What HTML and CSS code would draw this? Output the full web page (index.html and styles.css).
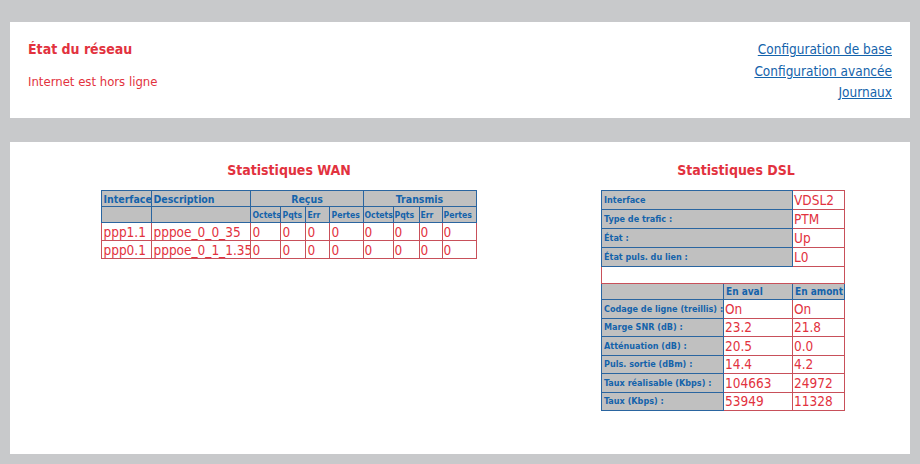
FILE: index.html
```html
<!DOCTYPE html>
<html lang="fr">
<head>
    <meta charset="UTF-8">
    <meta name="viewport" content="width=device-width, initial-scale=1.0">
    <title>État du réseau</title>
    <link rel="stylesheet" href="styles.css">
</head>
<body>
    <main>
        <section class="panneau entete">
            <div class="etat">
                <h1>État du réseau</h1>
                <p>Internet est hors ligne</p>
            </div>
            <nav class="liens">
                <a href="#">Configuration de base</a>
                <a href="#">Configuration avancée</a>
                <a href="#">Journaux</a>
            </nav>
        </section>
        <section class="panneau stats">
            <div class="stats-wan">
                <h2>Statistiques WAN</h2>
                <table class="tabela wan">
                    <colgroup>
                        <col style="width:50px"><col style="width:99px">
                        <col style="width:30px"><col style="width:25px"><col style="width:24px"><col style="width:33px">
                        <col style="width:30px"><col style="width:26px"><col style="width:23px"><col style="width:34px">
                    </colgroup>
                    <thead>
                        <tr class="h1">
                            <th>Interface</th>
                            <th>Description</th>
                            <th colspan="4" class="centro">Reçus</th>
                            <th colspan="4" class="centro">Transmis</th>
                        </tr>
                        <tr class="h2">
                            <th></th>
                            <th></th>
                            <th>Octets</th><th>Pqts</th><th>Err</th><th>Pertes</th>
                            <th>Octets</th><th>Pqts</th><th>Err</th><th>Pertes</th>
                        </tr>
                    </thead>
                    <tbody>
                        <tr>
                            <td>ppp1.1</td><td>pppoe_0_0_35</td>
                            <td>0</td><td>0</td><td>0</td><td>0</td>
                            <td>0</td><td>0</td><td>0</td><td>0</td>
                        </tr>
                        <tr>
                            <td>ppp0.1</td><td>pppoe_0_1_1.35</td>
                            <td>0</td><td>0</td><td>0</td><td>0</td>
                            <td>0</td><td>0</td><td>0</td><td>0</td>
                        </tr>
                    </tbody>
                </table>
            </div>
            <div class="stats-dsl">
                <h2>Statistiques DSL</h2>
                <table class="tabela dsl">
                    <colgroup>
                        <col style="width:122px"><col style="width:69px"><col style="width:52px">
                    </colgroup>
                    <tbody>
                        <tr class="haut"><th colspan="2">Interface</th><td>VDSL2</td></tr>
                        <tr class="haut"><th colspan="2">Type de trafic :</th><td>PTM</td></tr>
                        <tr class="haut"><th colspan="2">État :</th><td>Up</td></tr>
                        <tr class="haut"><th colspan="2">État puls. du lien :</th><td>L0</td></tr>
                        <tr class="vide"><td colspan="3"></td></tr>
                        <tr class="titre"><th></th><th>En aval</th><th>En amont</th></tr>
                        <tr><th>Codage de ligne (treillis) :</th><td>On</td><td>On</td></tr>
                        <tr><th>Marge SNR (dB) :</th><td>23.2</td><td>21.8</td></tr>
                        <tr><th>Atténuation (dB) :</th><td>20.5</td><td>0.0</td></tr>
                        <tr><th>Puls. sortie (dBm) :</th><td>14.4</td><td>4.2</td></tr>
                        <tr><th>Taux réalisable (Kbps) :</th><td>104663</td><td>24972</td></tr>
                        <tr><th>Taux (Kbps) :</th><td>53949</td><td>11328</td></tr>
                    </tbody>
                </table>
            </div>
        </section>
    </main>
</body>
</html>
```
FILE: styles.css
```css
* {
    font-family: "DejaVu Sans Condensed", "DejaVu Sans", sans-serif;
    box-sizing: border-box;
}
body {
    margin: 0;
    background-color: #c8c9cb;
}
main {
    display: flex;
    flex-direction: column;
    gap: 24px;
    padding: 22px 10px 10px 10px;
}
.panneau {
    background-color: #ffffff;
}
.entete {
    display: flex;
    justify-content: space-between;
    height: 96px;
    padding: 18px 18px 0 18px;
}
.etat h1 {
    margin: 0;
    color: #e2323e;
    font-size: 14px;
    font-weight: bold;
    line-height: 18px;
}
.etat p {
    margin: 16px 0 0 0;
    color: #e2323e;
    font-size: 13px;
    line-height: 16px;
}
.liens {
    display: flex;
    flex-direction: column;
    align-items: flex-end;
    margin-top: -1px;
}
.liens a {
    color: #1463ab;
    font-size: 13.5px;
    line-height: 21.5px;
}
.stats {
    display: flex;
    height: 312px;
}
.stats h2 {
    margin: 0;
    color: #e2323e;
    font-size: 14px;
    font-weight: bold;
    line-height: 18px;
    text-align: center;
}
.stats-wan {
    width: 558px;
    padding-top: 19px;
    display: flex;
    flex-direction: column;
    align-items: center;
    gap: 11px;
}
.stats-dsl {
    width: 336px;
    padding-top: 19px;
    display: flex;
    flex-direction: column;
    gap: 11px;
}
.stats-dsl table {
    margin-left: 33px;
}
.tabela {
    border-collapse: collapse;
    table-layout: fixed;
}
.wan {
    width: 374px;
}
.dsl {
    width: 243px;
}
.tabela th {
    background-color: #c0c0c0;
    border: 1px solid #2a65a0;
    color: #1463ab;
    font-weight: bold;
    text-align: left;
    padding: 0 1px;
    white-space: nowrap;
    overflow: hidden;
}
.tabela td {
    border: 1px solid #c8505a;
    color: #e2323e;
    font-size: 13.5px;
    padding: 0 1px;
    white-space: nowrap;
    overflow: hidden;
}
.wan th.centro {
    text-align: center;
}
.wan .h1 th {
    height: 16px;
    font-size: 10.5px;
}
.wan .h2 th {
    height: 16px;
    font-size: 8.6px;
    padding: 0 0 0 1px;
}
.wan td {
    height: 18px;
}
.dsl th {
    font-size: 9px;
    height: 18.5px;
    padding-left: 2px;
}
.dsl .haut th,
.dsl .haut td {
    height: 19px;
}
.dsl .vide td {
    height: 17px;
}
.dsl .titre th {
    height: 16px;
    font-size: 10px;
}
.dsl td {
    height: 18.5px;
}
```
